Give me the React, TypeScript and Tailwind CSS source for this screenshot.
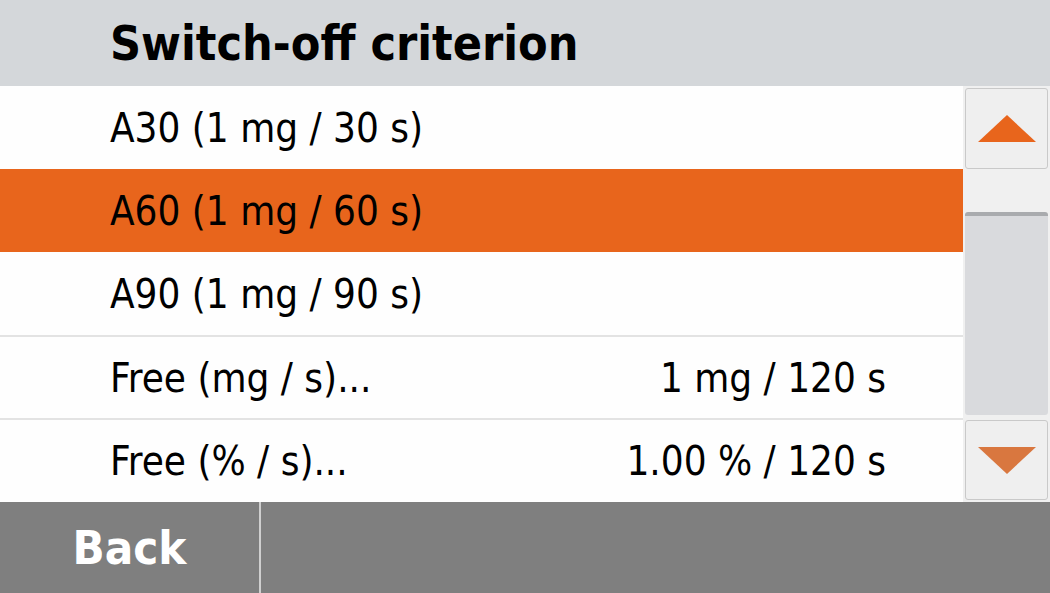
const rows = [
  { label: "A30 (1 mg / 30 s)", value: "" },
  { label: "A60 (1 mg / 60 s)", value: "", selected: true },
  { label: "A90 (1 mg / 90 s)", value: "" },
  { label: "Free (mg / s)...", value: "1 mg / 120 s" },
  { label: "Free (% / s)...", value: "1.00 % / 120 s" },
];

const font = { fontFamily: '"DejaVu Sans Condensed", "DejaVu Sans", sans-serif' };

export default function App() {
  return (
    <div className="w-[1050px] h-[593px] overflow-hidden flex flex-col bg-white" style={font}>
      {/* title bar */}
      <div className="h-[86px] shrink-0 bg-[#d4d7da] flex items-center pl-[110px]">
        <h1 className="text-[48px] leading-none font-bold text-black">Switch-off criterion</h1>
      </div>

      <div className="flex h-[416px] shrink-0">
        {/* list */}
        <div className="flex-1 flex flex-col">
          {rows.map((r, i) => (
            <div
              key={i}
              className={`h-[83px] shrink-0 flex items-center pl-[110px] pr-[77px] text-[40px] leading-none text-black ${
                r.selected ? "bg-[#e8651c]" : "bg-[#fefefe]"
              } ${i > 0 && !r.selected && !rows[i - 1].selected ? "border-t-2 border-[#e3e3e3]" : ""}`}
            >
              <span className="flex-1">{r.label}</span>
              <span>{r.value}</span>
            </div>
          ))}
        </div>

        {/* scrollbar */}
        <div className="w-[87px] shrink-0 bg-[#f0f0f0] flex flex-col px-[2px] py-[2px]">
          <div className="h-[81px] shrink-0 rounded-[3px] border border-[#c9c9c9] bg-[#efefef] flex items-center justify-center">
            <svg width="60" height="30" viewBox="0 0 60 30">
              <polygon points="1,28 59,28 30,1" fill="#e8651c" />
            </svg>
          </div>
          <div className="flex-1 py-[43px] pb-[5px]">
            <div className="h-full rounded-[3px] border-t-[4px] border-[#a9abae] bg-[#d9dadd]" />
          </div>
          <div className="h-[80px] shrink-0 rounded-[3px] border border-[#c9c9c9] bg-[#efefef] flex items-center justify-center">
            <svg width="60" height="30" viewBox="0 0 60 30">
              <polygon points="1,2 59,2 30,29" fill="#d9773f" />
            </svg>
          </div>
        </div>
      </div>

      {/* footer */}
      <div className="flex-1 bg-[#7f7f7f] flex">
        <div className="w-[261px] border-r-2 border-[#cfcfcf] flex items-center justify-center">
          <span className="text-[47px] leading-none font-bold text-white">Back</span>
        </div>
      </div>
    </div>
  );
}
